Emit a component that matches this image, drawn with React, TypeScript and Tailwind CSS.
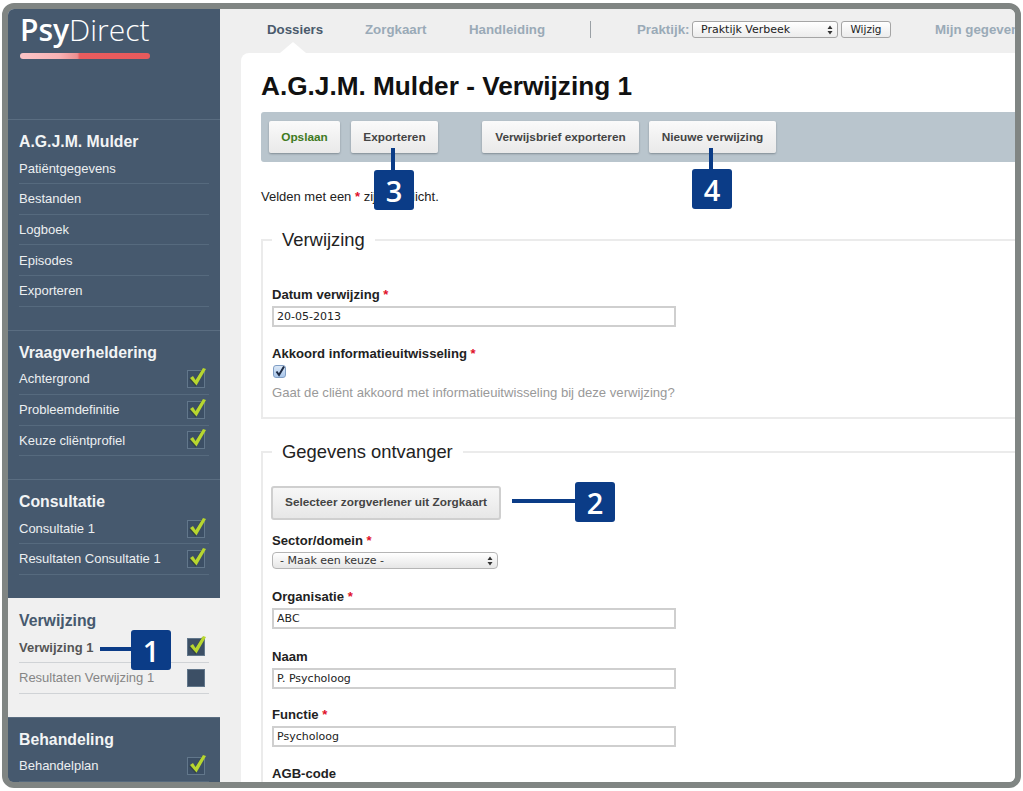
import type { ReactNode } from "react";

const SANS = "font-['Liberation_Sans',Arial,sans-serif]";

// Lime tick box used next to the sidebar rows
function StatusBox({ done }: { done: boolean }) {
  return (
    <span className="relative block w-[18px] h-[18px] shrink-0 bg-[#3c4f65] border border-[#62778b]">
      {done && (
        <svg className="absolute -left-px -top-[5px] overflow-visible" width="22" height="24" viewBox="0 0 22 24">
          <path d="M3 12 L6 10 L8.5 14 L16 2 L19 3 L9.5 19.5 Z" fill="#2c3a2a" opacity="0.5" transform="translate(-1 1)" />
          <path d="M3 12 L6 10 L8.5 14 L16 2 L19 3 L9.5 19.5 Z" fill="#b7d62f" />
        </svg>
      )}
    </span>
  );
}

type Row = { label: string; check?: boolean; active?: boolean };

function Section({ title, rows, light }: { title: string; rows: Row[]; light?: boolean }) {
  return (
    <section className={`px-[11px] pb-[23px] border-t ${light ? "bg-[#f0f0f0] border-[#f0f0f0]" : "bg-[#46596e] border-[#5a6d81]"}`}>
      <h2 className={`h-[33.5px] pt-[12px] text-[15.8px] leading-[20px] font-bold ${light ? "text-[#46596e]" : "text-[#f2f4f5]"}`}>{title}</h2>
      {rows.map((r) => (
        <div
          key={r.label}
          className={`flex items-center justify-between h-[30.67px] pr-[4px] border-b text-[13px] ${
            light ? "border-[#d0d3d6]" : "border-[#566a7e]"
          } ${light ? (r.active ? "font-bold text-[#555]" : "text-[#858585]") : "text-[#eceff1]"}`}
        >
          <span>{r.label}</span>
          {r.check !== undefined && <StatusBox done={r.check} />}
        </div>
      ))}
    </section>
  );
}

function Sidebar() {
  return (
    <aside className="w-[212px] shrink-0 bg-[#46596e]">
      <div className="h-[110px] pl-[12px] pt-[1px]">
        <div className="text-[30px] leading-[40px] text-white font-['Open_Sans',sans-serif] font-light">
          <span className="font-semibold">Psy</span>Direct
        </div>
        <div className="mt-[3px] w-[130px] h-[6px] rounded-full bg-[linear-gradient(90deg,#fbc4c6_0%,#f9b3b5_30%,#ee8f90_44%,#e85c5e_46%,#e85a5c_100%)]" />
      </div>
      <Section
        title="A.G.J.M. Mulder"
        rows={[{ label: "Patiëntgegevens" }, { label: "Bestanden" }, { label: "Logboek" }, { label: "Episodes" }, { label: "Exporteren" }]}
      />
      <Section
        title="Vraagverheldering"
        rows={[
          { label: "Achtergrond", check: true },
          { label: "Probleemdefinitie", check: true },
          { label: "Keuze cliëntprofiel", check: true },
        ]}
      />
      <Section
        title="Consultatie"
        rows={[
          { label: "Consultatie 1", check: true },
          { label: "Resultaten Consultatie 1", check: true },
        ]}
      />
      <Section
        light
        title="Verwijzing"
        rows={[
          { label: "Verwijzing 1", check: true, active: true },
          { label: "Resultaten Verwijzing 1", check: false },
        ]}
      />
      <Section title="Behandeling" rows={[{ label: "Behandelplan", check: true }]} />
    </aside>
  );
}

function NavLink({ children, className }: { children: ReactNode; className: string }) {
  return <a className={`shrink-0 text-[13.3px] font-bold ${className}`}>{children}</a>;
}

function SelectArrows() {
  return (
    <svg className="absolute right-[5px] top-1/2 -translate-y-1/2" width="6" height="10" viewBox="0 0 6 10">
      <path d="M3 0.5 L5.5 4 H0.5 Z M3 9.5 L0.5 6 H5.5 Z" fill="#333" />
    </svg>
  );
}

function TopNav() {
  return (
    <nav className="relative flex items-center h-[44px] shrink-0 pl-[47px] pb-[3px] bg-[#efefef] whitespace-nowrap">
      <NavLink className="text-[#4a5a6c] w-[98px]">Dossiers</NavLink>
      <NavLink className="text-[#9aaab7] w-[104px]">Zorgkaart</NavLink>
      <NavLink className="text-[#9aaab7] w-[121px]">Handleiding</NavLink>
      <span className="shrink-0 w-px h-[17px] bg-[#9aa0a5]" />
      <NavLink className="ml-[46px] w-[55px] text-[#9aaab7]">Praktijk:</NavLink>
      <div className="relative shrink-0 w-[146px] h-[17px]">
        <select
          defaultValue="Praktijk Verbeek"
          className="block w-full h-full pl-[8px] appearance-none rounded-[3px] border border-[#a5a5a5] bg-[linear-gradient(#ffffff,#ececec)] text-[11px] text-[#222] font-['DejaVu_Sans',sans-serif]"
        >
          <option>Praktijk Verbeek</option>
        </select>
        <SelectArrows />
      </div>
      <button className="shrink-0 ml-[3px] w-[50px] h-[17px] rounded-[3px] border border-[#a5a5a5] bg-[linear-gradient(#ffffff,#ececec)] text-[10.5px] leading-none text-[#222] font-['DejaVu_Sans',sans-serif]">
        Wijzig
      </button>
      <NavLink className="ml-[44px] text-[#9aaab7]">Mijn gegevens</NavLink>
      {/* arrow pointing at the active tab */}
      <svg className="absolute left-[60px] bottom-0" width="26" height="11" viewBox="0 0 26 11">
        <path d="M0 11 L13 0 L26 11 Z" fill="#ffffff" />
      </svg>
    </nav>
  );
}

function ToolButton({ children, className = "" }: { children: ReactNode; className?: string }) {
  return (
    <button
      className={`h-[32px] pt-px rounded-[2px] bg-[linear-gradient(#fafafa,#e9e9e9)] shadow-[0_1px_2px_rgba(60,70,80,0.45)] text-[11.8px] font-bold ${className}`}
    >
      {children}
    </button>
  );
}

function Required() {
  return <span className="text-[#e0102a] font-bold"> *</span>;
}

function Field({ label, required, value, className = "" }: { label: string; required?: boolean; value: string; className?: string }) {
  return (
    <div className={className}>
      <label className="block h-[20px] text-[13.1px] leading-[18px] font-bold text-[#222]">
        {label}
        {required && <Required />}
      </label>
      <input
        readOnly
        value={value}
        className="block w-[404px] h-[21px] px-[3px] border-2 border-[#cfcfcf] bg-white text-[11px] text-[#222] font-['DejaVu_Sans',sans-serif]"
      />
    </div>
  );
}

function Legend({ children }: { children: ReactNode }) {
  return <legend className="ml-[9px] px-[10px] text-[18.4px] leading-[24px] text-[#222]">{children}</legend>;
}

function Card() {
  return (
    <div className="ml-[21px] w-[900px] flex-1 pl-[20px] rounded-tl-[8px] bg-white">
      <h1 className="pt-[16px] h-[59px] text-[26.2px] leading-[34px] font-bold text-[#111]">A.G.J.M. Mulder - Verwijzing 1</h1>
      <div className="flex items-center h-[50px] pl-[8px] rounded-l-[3px] bg-[#b9c5cd]">
        <ToolButton className="w-[71px] text-[#3f7a1f]">Opslaan</ToolButton>
        <ToolButton className="ml-[11px] w-[87px] text-[#444]">Exporteren</ToolButton>
        <ToolButton className="ml-[44px] w-[157px] text-[#444]">Verwijsbrief exporteren</ToolButton>
        <ToolButton className="ml-[10px] w-[127px] text-[#444]">Nieuwe verwijzing</ToolButton>
      </div>
      <p className="mt-[27px] h-[18px] text-[13px] leading-[16px] text-[#222]">
        Velden met een <span className="text-[#e0102a] font-bold">*</span> zijn verplicht.
      </p>

      <fieldset className="mt-[21px] p-0 border-2 border-[#ebebeb]">
        <Legend>Verwijzing</Legend>
        <div className="h-[165px] pl-[9px] pt-[34px]">
          <Field label="Datum verwijzing" required value="20-05-2013" />
          <div className="mt-[18px] h-[19px] text-[13.1px] leading-[18px] font-bold text-[#222]">
            Akkoord informatieuitwisseling
            <Required />
          </div>
          <span className="flex items-center justify-center mt-px ml-px w-[13px] h-[13px] rounded-[3px] border border-[#7f9dc4] bg-[linear-gradient(#dbe8f7,#a9c6ea)]">
            <svg width="12" height="12" viewBox="0 0 12 12" className="overflow-visible">
              <path d="M2.5 5.5 L5 9 L10 0.5" fill="none" stroke="#1c2a44" strokeWidth="2" />
            </svg>
          </span>
          <p className="mt-[7px] text-[13.13px] leading-[16px] text-[#999]">Gaat de cliënt akkoord met informatieuitwisseling bij deze verwijzing?</p>
        </div>
      </fieldset>

      <fieldset className="mt-[21px] p-0 border-2 border-[#ebebeb]">
        <Legend>Gegevens ontvanger</Legend>
        <div className="pl-[8px] pt-[22px]">
          <button className="block w-[230px] h-[34px] rounded-[3px] border-2 border-[#cfcfcf] bg-[linear-gradient(#f7f7f7,#e7e7e7)] text-[11.8px] font-bold text-[#444]">
            Selecteer zorgverlener uit Zorgkaart
          </button>
          <div className="mt-[12px] ml-px h-[20px] text-[13.1px] leading-[18px] font-bold text-[#222]">
            Sector/domein
            <Required />
          </div>
          <div className="relative ml-px w-[226px] h-[17px]">
            <select
              defaultValue="- Maak een keuze -"
              className="block w-full h-full pl-[7px] appearance-none rounded-[4px] border border-[#b5b5b5] bg-[linear-gradient(#ffffff,#e6e6e6)] text-[11px] text-[#333] font-['DejaVu_Sans',sans-serif]"
            >
              <option>- Maak een keuze -</option>
            </select>
            <SelectArrows />
          </div>
          <Field className="mt-[19px] ml-px" label="Organisatie" required value="ABC" />
          <Field className="mt-[19px] ml-px" label="Naam" value="P. Psycholoog" />
          <Field className="mt-[17px] ml-px" label="Functie" required value="Psycholoog" />
          <Field className="mt-[18px] ml-px" label="AGB-code" value="" />
        </div>
      </fieldset>
    </div>
  );
}

// Numbered callout placed over the screenshot
function Callout({ n, className, line }: { n: number; className: string; line: string }) {
  return (
    <div className={`absolute ${className} w-[40px] h-[40px] rounded-[3px] bg-[#0b3c87] text-white flex items-center justify-center text-[29px] leading-none font-semibold font-['Open_Sans',sans-serif]`}>
      {n}
      <span className={`absolute bg-[#0b3c87] ${line}`} />
    </div>
  );
}

export default function App() {
  return (
    <div className={`h-[791px] w-[1023px] overflow-hidden bg-white pt-[3px] pl-[2px] pr-[2px] pb-[3px] ${SANS}`}>
      <div className="relative h-full rounded-[12px] border-[6px] border-[#808583] overflow-hidden flex bg-[#efefef]">
        <Sidebar />
        <main className="flex-1 min-w-0 flex flex-col overflow-hidden">
          <TopNav />
          <Card />
        </main>
        <Callout n={1} className="left-[123px] top-[621px]" line="right-full top-[17px] w-[31px] h-[4px]" />
        <Callout n={2} className="left-[567px] top-[473px]" line="right-full top-[17px] w-[63px] h-[4px]" />
        <Callout n={3} className="left-[366px] top-[161px]" line="bottom-full left-[17px] w-[4px] h-[22px]" />
        <Callout n={4} className="left-[684px] top-[160px]" line="bottom-full left-[17px] w-[4px] h-[21px]" />
      </div>
    </div>
  );
}
